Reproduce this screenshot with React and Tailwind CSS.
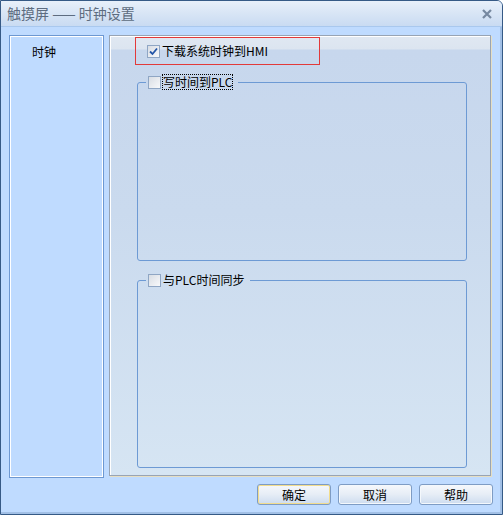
import React from "react";

const font = { fontFamily: '"Noto Sans CJK SC", "Noto Sans", sans-serif' };

function CheckBox({ checked }) {
  return (
    <span className="inline-flex h-[13px] w-[13px] shrink-0 items-center justify-center border border-[#8fa6c4] bg-[linear-gradient(135deg,#d8dde4,#f8f9fb)]">
      {checked && (
        <svg width="9" height="9" viewBox="0 0 9 9">
          <path d="M1 4.5 L3.5 7 L8 1.5" fill="none" stroke="#2456a8" strokeWidth="1.8" />
        </svg>
      )}
    </span>
  );
}

function GroupBox({ label, focus, className }) {
  return (
    <fieldset className={`ml-[27px] w-[330px] rounded-[3px] border border-[#6d9ad4] ${className}`}>
      <legend className="ml-[8px] flex items-center gap-[2px] px-[2px] pr-[6px]">
        <CheckBox />
        <span
          className={`text-[12px] leading-[14px] text-black ${focus ? "outline outline-1 outline-dotted outline-black" : ""}`}
        >
          {label}
        </span>
      </legend>
    </fieldset>
  );
}

function Button({ children, primary }) {
  return (
    <button
      className={`h-[21px] w-[74px] rounded-[3px] border text-[12px] leading-none text-black bg-[linear-gradient(to_bottom,#f6f8fb,#e6edf6_50%,#cddcef)] ${
        primary
          ? "border-[#7e9cc4] shadow-[inset_0_0_0_1px_#f2dc8c]"
          : "border-[#7e9cc4] shadow-[inset_0_0_0_1px_#f4f8fc]"
      }`}
    >
      {children}
    </button>
  );
}

export default function App() {
  return (
    <div
      className="flex h-[515px] w-[503px] flex-col overflow-hidden rounded-tr-[6px] border border-[#365a86] bg-[#bfdbff]"
      style={font}
    >
      {/* title bar */}
      <div className="flex h-[26px] shrink-0 items-center justify-between border-b border-[#a9c8ee] bg-[linear-gradient(to_bottom,#e8f0fa,#dbe7f6_40%,#c9dbf2)] pl-[6px] pr-[9px]">
        <span className="text-[14px] text-[#5d6c80]">触摸屏 —— 时钟设置</span>
        <svg width="12" height="10" viewBox="0 0 12 10">
          <path d="M2 1 L10 9 M10 1 L2 9" stroke="#7688a0" strokeWidth="2.2" />
        </svg>
      </div>

      {/* body */}
      <div className="flex flex-1 flex-col border-b-[2px] border-r-[2px] border-[#a2c0e6] pl-[8px] pt-[8px]">
        <div className="flex gap-[5px]">
          <div className="h-[443px] w-[95px] border border-[#6d98d2] shadow-[inset_0_0_0_1px_#ffffff] px-[22px] pt-[9px]">
            <span className="block text-[12px] leading-[14px] text-black">时钟</span>
          </div>

          <div className="flex h-[441px] w-[382px] flex-col border border-[#98a4b4] bg-[linear-gradient(to_bottom,#e0e8f2_0px,#dce5f0_13px,#c7d7ed_14px,#cadaee_40%,#d6e5f3_100%)] shadow-[inset_1px_1px_0_#ffffff,1px_1px_0_#e6dec2]">
            <div className="ml-[25px] mt-[1px] flex h-[28px] w-[185px] items-center gap-[2px] border border-[#e23a3a] pl-[11px]">
              <CheckBox checked />
              <span className="text-[12px] text-black">下载系统时钟到HMI</span>
            </div>

            <GroupBox label="写时间到PLC" focus className="mt-[10px] h-[186px]" />
            <GroupBox label="与PLC时间同步" className="mt-[12px] h-[195px]" />
          </div>
        </div>

        <div className="mt-[6px] flex justify-end gap-[7px] pr-[7px]">
          <Button primary>确定</Button>
          <Button>取消</Button>
          <Button>帮助</Button>
        </div>
      </div>
    </div>
  );
}
